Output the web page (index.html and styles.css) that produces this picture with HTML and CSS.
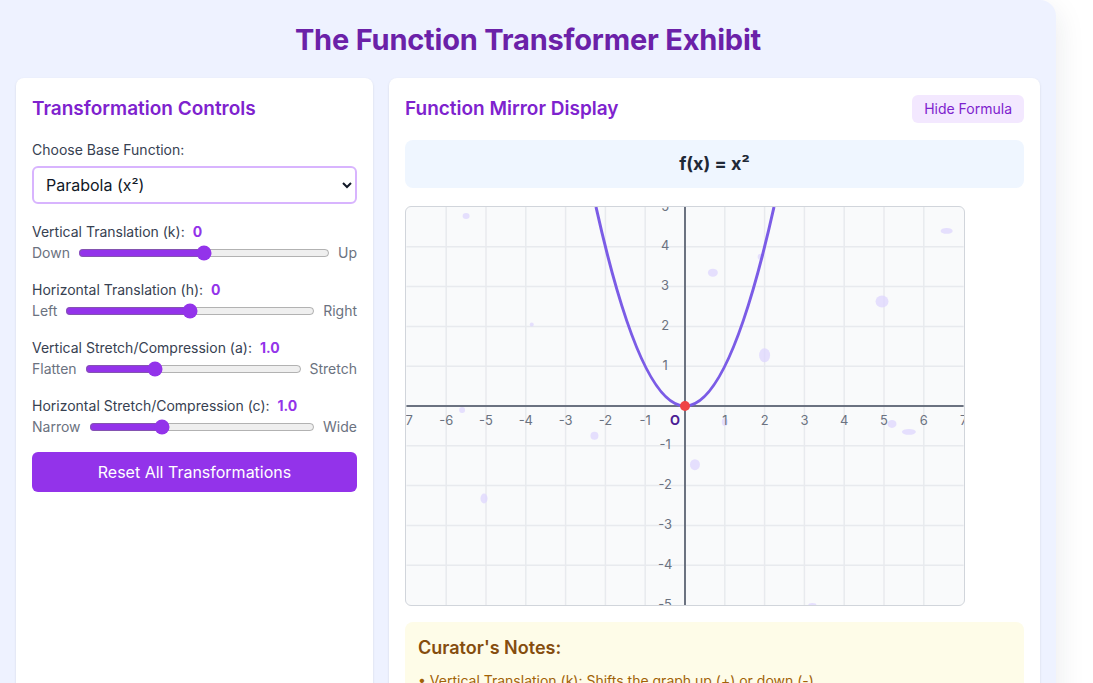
FILE: index.html
```html
<!DOCTYPE html>
<html lang="en">

<head>
    <meta charset="UTF-8">
    <meta name="viewport" content="width=device-width, initial-scale=1.0">
    <title>The Function Transformer Exhibit</title>

    <link rel="stylesheet" href="styles.css">
</head>

<body>
    <main class="exhibit">
        <h1 class="title">The Function Transformer Exhibit</h1>

        <div class="layout">
            <!-- controls -->
            <section class="panel controls">
                <h2 class="panel-title">Transformation Controls</h2>

                <label class="field-label" for="base">Choose Base Function:</label>
                <select id="base" class="base-select">
                    <option>Parabola (x²)</option>
                    <option>Absolute Value (|x|)</option>
                    <option>Cubic (x³)</option>
                    <option>Square Root (√x)</option>
                </select>

                <div class="sliders">
                    <div class="slider">
                        <div class="slider-label">Vertical Translation (k): <span class="value">0</span></div>
                        <div class="slider-row">
                            <span>Down</span>
                            <input type="range" min="-5" max="5" step="0.5" value="0">
                            <span>Up</span>
                        </div>
                    </div>

                    <div class="slider">
                        <div class="slider-label">Horizontal Translation (h): <span class="value">0</span></div>
                        <div class="slider-row">
                            <span>Left</span>
                            <input type="range" min="-5" max="5" step="0.5" value="0">
                            <span>Right</span>
                        </div>
                    </div>

                    <div class="slider">
                        <div class="slider-label">Vertical Stretch/Compression (a): <span class="value">1.0</span></div>
                        <div class="slider-row">
                            <span>Flatten</span>
                            <input type="range" min="0.1" max="3" step="0.1" value="1">
                            <span>Stretch</span>
                        </div>
                    </div>

                    <div class="slider">
                        <div class="slider-label">Horizontal Stretch/Compression (c): <span class="value">1.0</span></div>
                        <div class="slider-row">
                            <span>Narrow</span>
                            <input type="range" min="0.1" max="3" step="0.1" value="1">
                            <span>Wide</span>
                        </div>
                    </div>
                </div>

                <button class="reset-btn">Reset All Transformations</button>
            </section>

            <!-- display -->
            <section class="panel display">
                <div class="display-head">
                    <h2 class="panel-title">Function Mirror Display</h2>
                    <button class="toggle-btn">Hide Formula</button>
                </div>

                <div class="formula">f(x) = x²</div>

                <svg class="graph" viewBox="0 0 560 400" width="560" height="400">
                    <g class="grid">
                        <line x1="40" y1="0" x2="40" y2="400" />
                        <line x1="80" y1="0" x2="80" y2="400" />
                        <line x1="120" y1="0" x2="120" y2="400" />
                        <line x1="160" y1="0" x2="160" y2="400" />
                        <line x1="200" y1="0" x2="200" y2="400" />
                        <line x1="240" y1="0" x2="240" y2="400" />
                        <line x1="320" y1="0" x2="320" y2="400" />
                        <line x1="360" y1="0" x2="360" y2="400" />
                        <line x1="400" y1="0" x2="400" y2="400" />
                        <line x1="440" y1="0" x2="440" y2="400" />
                        <line x1="480" y1="0" x2="480" y2="400" />
                        <line x1="520" y1="0" x2="520" y2="400" />
                        <line x1="0" y1="40" x2="560" y2="40" />
                        <line x1="0" y1="80" x2="560" y2="80" />
                        <line x1="0" y1="120" x2="560" y2="120" />
                        <line x1="0" y1="160" x2="560" y2="160" />
                        <line x1="0" y1="240" x2="560" y2="240" />
                        <line x1="0" y1="280" x2="560" y2="280" />
                        <line x1="0" y1="320" x2="560" y2="320" />
                        <line x1="0" y1="360" x2="560" y2="360" />
                    </g>

                    <!-- floating sparkles -->
                    <g class="sparkles">
                        <ellipse cx="60" cy="9" rx="3.5" ry="3" />
                        <ellipse cx="126" cy="118" rx="2" ry="2" />
                        <ellipse cx="56" cy="204" rx="3" ry="3" />
                        <ellipse cx="189" cy="230" rx="4" ry="4" />
                        <ellipse cx="78" cy="293" rx="3.5" ry="5" />
                        <ellipse cx="308" cy="66" rx="5" ry="4" />
                        <ellipse cx="356" cy="50" rx="3" ry="3" />
                        <ellipse cx="360" cy="149" rx="5.5" ry="7" />
                        <ellipse cx="320" cy="216" rx="3" ry="4" />
                        <ellipse cx="290" cy="259" rx="5" ry="5.5" />
                        <ellipse cx="478" cy="95" rx="6.5" ry="6" />
                        <ellipse cx="543" cy="24" rx="6" ry="3" />
                        <ellipse cx="488" cy="218" rx="4.5" ry="4" />
                        <ellipse cx="505" cy="226" rx="7" ry="3" />
                        <ellipse cx="408" cy="400" rx="4" ry="2" />
                    </g>

                    <g class="axes">
                        <line x1="0" y1="200" x2="560" y2="200" />
                        <line x1="280" y1="0" x2="280" y2="400" />
                    </g>

                    <g class="ticks x-ticks">
                        <text x="0" y="216">-7</text>
                        <text x="40" y="216">-6</text>
                        <text x="80" y="216">-5</text>
                        <text x="120" y="216">-4</text>
                        <text x="160" y="216">-3</text>
                        <text x="200" y="216">-2</text>
                        <text x="240" y="216">-1</text>
                        <text x="320" y="216">1</text>
                        <text x="360" y="216">2</text>
                        <text x="400" y="216">3</text>
                        <text x="440" y="216">4</text>
                        <text x="480" y="216">5</text>
                        <text x="520" y="216">6</text>
                        <text x="560" y="216">7</text>
                    </g>
                    <g class="ticks y-ticks">
                        <text x="260" y="0">5</text>
                        <text x="260" y="40">4</text>
                        <text x="260" y="80">3</text>
                        <text x="260" y="120">2</text>
                        <text x="260" y="160">1</text>
                        <text x="260" y="240">-1</text>
                        <text x="260" y="280">-2</text>
                        <text x="260" y="320">-3</text>
                        <text x="260" y="360">-4</text>
                        <text x="260" y="400">-5</text>
                    </g>
                    <text class="origin" x="270" y="216">O</text>

                    <!-- y = x^2 between x = -sqrt(5) and sqrt(5) -->
                    <path class="curve" d="M 190.56 0 Q 280 400 369.44 0" />
                    <circle class="vertex" cx="280" cy="200" r="5" />
                </svg>

                <div class="notes">
                    <h3 class="notes-title">Curator's Notes:</h3>
                    <ul class="notes-list">
                        <li>Vertical Translation (k): Shifts the graph up (+) or down (-).</li>
                        <li>Horizontal Translation (h): Shifts the graph right (+) or left (-).</li>
                        <li>Vertical Stretch (a): Values above 1 stretch, below 1 flatten.</li>
                        <li>Horizontal Stretch (c): Values above 1 widen, below 1 narrow.</li>
                    </ul>
                </div>
            </section>
        </div>
    </main>
</body>

</html>
```

FILE: styles.css
```css
* {
    box-sizing: border-box;
}

body {
    margin: 0;
    background: #fff;
    font-family: Inter, "Noto Sans", sans-serif;
    color: #374151;
    overflow: hidden;
}

.exhibit {
    width: 1056px;
    min-height: 760px;
    padding: 24px 16px 16px;
    background: #eef2ff;
    border-radius: 0 16px 16px 0;
    box-shadow: 0 10px 30px rgba(30, 41, 59, 0.10);
}

.title {
    margin: 0 0 22px;
    text-align: center;
    font-size: 29px;
    line-height: 32px;
    font-weight: 700;
    color: #6b21a8;
    letter-spacing: -0.2px;
}

.layout {
    display: grid;
    grid-template-columns: 357px 1fr;
    gap: 16px;
    align-items: start;
}

.panel {
    background: #fff;
    border-radius: 8px;
    padding: 16px;
    box-shadow: 0 1px 3px rgba(0, 0, 0, 0.08), 0 1px 2px rgba(0, 0, 0, 0.04);
    min-height: 680px;
}

.panel-title {
    margin: 0;
    padding-top: 1px;
    font-size: 19px;
    line-height: 28px;
    font-weight: 600;
    color: #7e22ce;
}

/* controls */

.controls .panel-title {
    margin-bottom: 17px;
}

.field-label {
    display: block;
    font-size: 14px;
    line-height: 20px;
    margin-bottom: 6px;
}

.base-select {
    width: 100%;
    height: 38px;
    padding: 0 8px;
    border: 2px solid #d8b4fe;
    border-radius: 6px;
    background: #fff;
    font-family: inherit;
    font-size: 16px;
    color: #111827;
}

.sliders {
    display: flex;
    flex-direction: column;
    gap: 17px;
    margin-top: 18px;
}

.slider-label {
    font-size: 14px;
    line-height: 20px;
    color: #374151;
}

.slider-label .value {
    margin-left: 4px;
    font-weight: 700;
    color: #9333ea;
}

.slider-row {
    display: flex;
    align-items: center;
    gap: 6px;
    margin-top: 1px;
    font-size: 14px;
    line-height: 20px;
    color: #6b7280;
}

.slider-row input {
    flex: 1;
    min-width: 0;
    accent-color: #9333ea;
}

.reset-btn {
    width: 100%;
    height: 40px;
    margin-top: 15px;
    border: 0;
    border-radius: 6px;
    background: #9333ea;
    color: #fff;
    font-family: inherit;
    font-size: 16px;
}

/* display */

.display-head {
    display: flex;
    justify-content: space-between;
    align-items: center;
    margin-bottom: 17px;
}

.toggle-btn {
    height: 28px;
    padding: 0 12px;
    border: 0;
    border-radius: 6px;
    background: #f3e8ff;
    color: #7e22ce;
    font-family: inherit;
    font-size: 14px;
}

.formula {
    padding: 12px;
    border-radius: 8px;
    background: #eff6ff;
    text-align: center;
    font-size: 18px;
    line-height: 24px;
    font-weight: 700;
    color: #1f2937;
}

.graph {
    display: block;
    margin-top: 18px;
    border: 1px solid #d1d5db;
    border-radius: 6px;
    background: #f9fafb;
}

.grid line {
    stroke: #e8eaee;
    stroke-width: 1.5;
}

.sparkles ellipse {
    fill: #ddd6fe;
    opacity: 0.75;
}

.axes line {
    stroke: #6b7280;
    stroke-width: 2;
}

.ticks text {
    font-family: Inter, sans-serif;
    font-size: 13px;
    fill: #6b7280;
    text-anchor: middle;
    dominant-baseline: middle;
}

.origin {
    font-family: Inter, sans-serif;
    font-size: 13px;
    font-weight: 700;
    fill: #4c1d95;
    text-anchor: middle;
    dominant-baseline: middle;
}

.curve {
    fill: none;
    stroke: #7b5ce6;
    stroke-width: 3;
}

.vertex {
    fill: #ef4444;
}

.notes {
    margin-top: 16px;
    padding: 12px 13px;
    border-radius: 8px;
    background: #fefce8;
}

.notes-title {
    margin: 0 0 9px;
    font-size: 18px;
    line-height: 28px;
    font-weight: 600;
    color: #854d0e;
}

.notes-list {
    margin: 0;
    padding: 0;
    list-style: none;
    font-size: 14px;
    line-height: 20px;
    color: #a16207;
}

.notes-list li::before {
    content: "• ";
}
```
